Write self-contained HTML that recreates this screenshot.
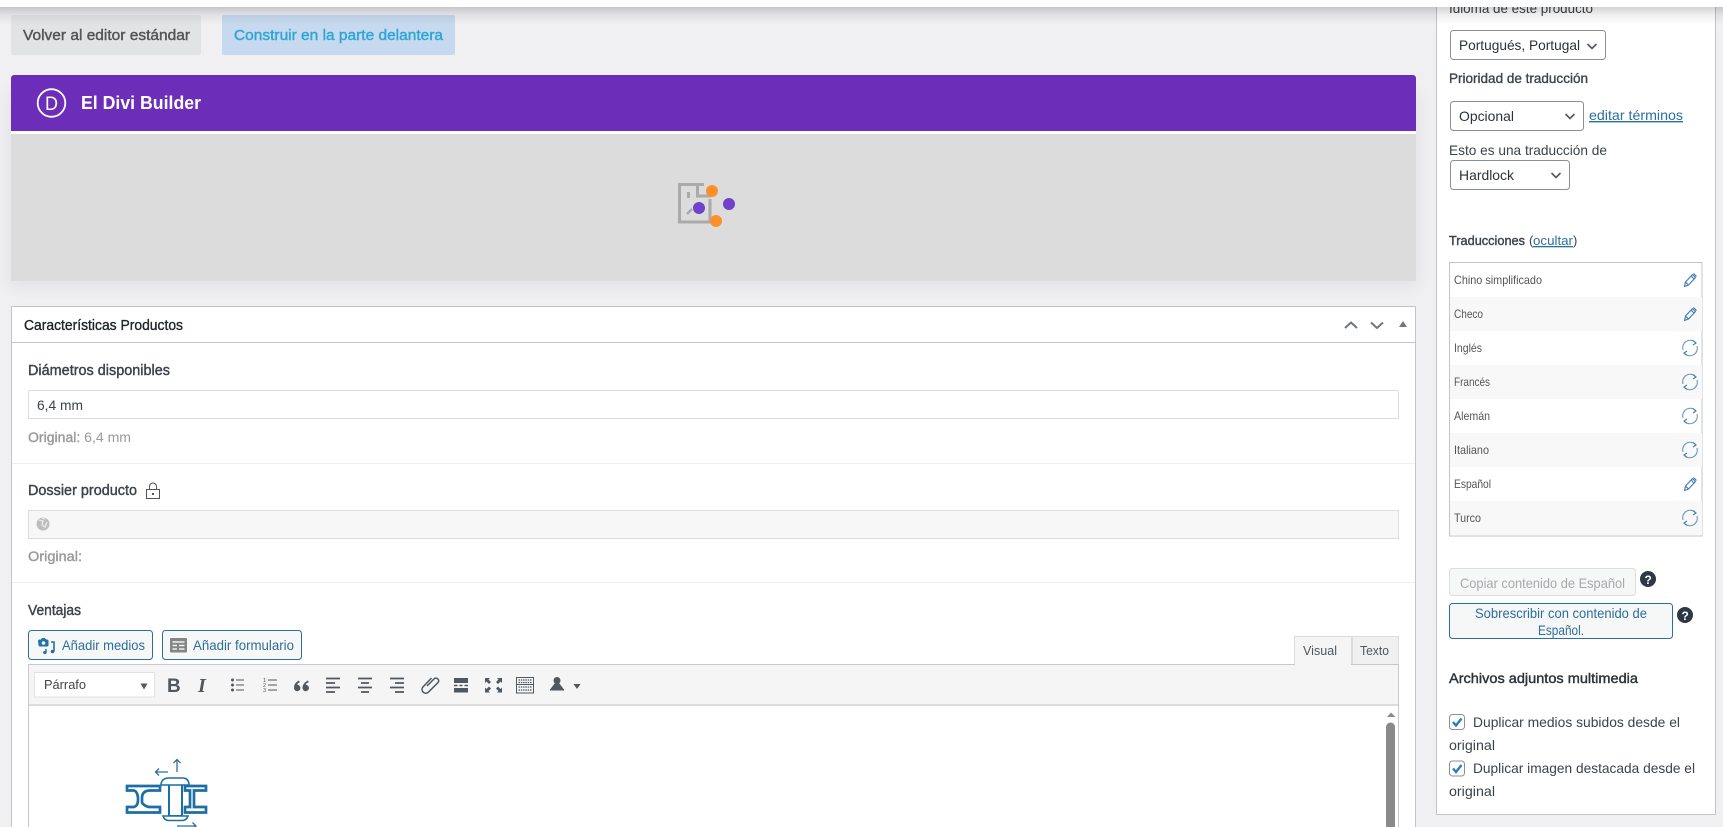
<!DOCTYPE html>
<html lang="es">
<head>
<meta charset="utf-8">
<title>El Divi Builder</title>
<style>
html,body{margin:0;padding:0;width:1723px;height:827px;overflow:hidden;background:#f0f0f2}
svg{display:block}
text{font-family:"Liberation Sans",sans-serif;font-size:14px;fill:#3c434a}
.li{font-size:12px;fill:#555}
.lnk{fill:#2a6f9e;text-decoration:underline}
.lab{font-size:14.500px;fill:#3c434a;stroke:#3c434a;stroke-width:.4px}
</style>
</head>
<body>
<svg width="1723" height="827" viewBox="0 0 1723 827" xmlns="http://www.w3.org/2000/svg">
<defs>
<linearGradient id="top" x1="0" y1="0" x2="0" y2="1"><stop offset="0" stop-color="#000" stop-opacity=".17"/><stop offset=".45" stop-color="#000" stop-opacity=".06"/><stop offset="1" stop-color="#000" stop-opacity="0"/></linearGradient>
<filter id="bl" x="-5%" y="-20%" width="110%" height="140%"><feGaussianBlur stdDeviation="8"/></filter>
<g id="pen" fill="none" stroke="#3c7ab0" stroke-width="1.100" stroke-linejoin="round"><path d="M-5.500 6.500 -4.500 2 2.500 -5.500 5.500 -2.500 -1.500 5 Z"/><path d="M1 -4 4 -1M-4.500 2-1.500 5"/><path d="M3.500 -6.500 6.500 -3.500"/></g>
<g id="syn" fill="none" stroke="#6b98bb" stroke-width="1.100"><path d="M-7 2A7.500 7.500 0 0 1 5.500 -5.500"/><path d="M7 -2A7.500 7.500 0 0 1 -5.500 5.500"/><path d="M3 -7.500 6 -5 3 -3" stroke="#3c7ab0"/><path d="M-3 7.500 -6 5 -3 3" stroke="#3c7ab0"/></g>
<g id="chev" fill="none" stroke="#50575e" stroke-width="1.600"><path d="M-4.500 -2 0 2.500 4.500 -2"/></g>
</defs>

<rect width="1723" height="827" fill="#f0f0f2"/>

<!-- buttons -->
<rect x="11" y="15" width="190" height="40" rx="2" fill="#e2e3e5"/>
<rect x="222" y="15" width="233" height="40" rx="2" fill="#c6d9ee"/>
<text x="23" y="40" textLength="167" lengthAdjust="spacingAndGlyphs" style="font-size:14.500px;fill:#555;stroke:#555;stroke-width:.4px">Volver al editor estándar</text>
<text x="234" y="40" textLength="209" lengthAdjust="spacingAndGlyphs" style="font-size:14.500px;fill:#2ea6d6;stroke:#2ea6d6;stroke-width:.4px">Construir en la parte delantera</text>

<!-- divi -->
<rect x="8" y="90" width="1411" height="198" fill="#000" opacity=".05" filter="url(#bl)"/>
<rect x="11" y="75" width="1405" height="59" fill="#fff"/>
<path d="M11 131V78a3 3 0 0 1 3-3H1413a3 3 0 0 1 3 3V131Z" fill="#6c2eb9"/>
<rect x="11" y="134" width="1405" height="147" fill="#dcdcdc"/>
<circle cx="51.500" cy="103" r="13.800" fill="none" stroke="#fff" stroke-width="1.800"/>
<text x="45" y="110" textLength="13" lengthAdjust="spacingAndGlyphs" style="fill:#fff;font-size:19px">D</text>
<text x="81" y="109" textLength="120" lengthAdjust="spacingAndGlyphs" style="fill:#fff;font-size:18.500px;font-weight:700">El Divi Builder</text>

<!-- loader -->
<path d="M710 199V222H679.500V184.500H704" fill="none" stroke="#aaa" stroke-width="3"/>
<path d="M697.500 184V196H711" fill="none" stroke="#aaa" stroke-width="3"/>
<rect x="687" y="192" width="3" height="6" fill="#aaa"/>
<path d="M687 214 692 209" stroke="#aaa" stroke-width="2.500"/>
<circle cx="712" cy="191" r="6" fill="#ff8f2b"/>
<circle cx="716" cy="221" r="6" fill="#ff8f2b"/>
<circle cx="699" cy="208" r="6" fill="#6f42c9"/>
<circle cx="729" cy="204" r="6" fill="#6f42c9"/>

<!-- metabox -->
<rect x="11.500" y="306.500" width="1404" height="540" fill="#fff" stroke="#c3c4c7"/>
<path d="M11 342.500H1416" stroke="#c3c4c7"/>
<text x="24" y="330" textLength="159" lengthAdjust="spacingAndGlyphs" style="font-size:14.500px;fill:#1d2327;stroke:#1d2327;stroke-width:.35px">Características Productos</text>
<path d="M1345 328 1351 322.500 1357 328" fill="none" stroke="#72777c" stroke-width="2"/>
<path d="M1371 322.500 1377 328 1383 322.500" fill="none" stroke="#72777c" stroke-width="2"/>
<path d="M1399 327 1403 321 1407 327Z" fill="#72777c"/>

<text class="lab" x="28" y="375" textLength="142" lengthAdjust="spacingAndGlyphs">Diámetros disponibles</text>
<rect x="28.500" y="390.500" width="1370" height="28" rx="1" fill="#fff" stroke="#dcdcde"/>
<text x="37" y="410" textLength="46" lengthAdjust="spacingAndGlyphs" style="fill:#3c434a">6,4 mm</text>
<text x="28" y="442" textLength="103" lengthAdjust="spacingAndGlyphs" style="fill:#9a9a9a"><tspan style="stroke:#9a9a9a;stroke-width:.4px">Original:</tspan> 6,4 mm</text>
<path d="M12 463.500H1415" stroke="#eee"/>

<text class="lab" x="28" y="495" textLength="109" lengthAdjust="spacingAndGlyphs">Dossier producto</text>
<rect x="146.500" y="489.500" width="13" height="9" fill="none" stroke="#555"/>
<path d="M149.500 489V486.500a3.500 3.500 0 0 1 7 0V489" fill="none" stroke="#555"/>
<rect x="152" y="493" width="2" height="2" fill="#555"/>
<rect x="28.500" y="510.500" width="1370" height="28" fill="#f7f7f7" stroke="#dcdcde"/>
<circle cx="43" cy="524" r="6.500" fill="#bdbdbd"/>
<path d="M39 520 43 521 42 525 45 527 47 522M42 518 45 519" fill="none" stroke="#ececec" stroke-width="1.300"/>
<text x="28" y="561" textLength="54" lengthAdjust="spacingAndGlyphs" style="fill:#9a9a9a;stroke:#9a9a9a;stroke-width:.4px">Original:</text>
<path d="M12 582.500H1415" stroke="#eee"/>

<text class="lab" x="28" y="615" textLength="53" lengthAdjust="spacingAndGlyphs">Ventajas</text>

<!-- media buttons -->
<rect x="28.500" y="630.500" width="124" height="29" rx="3" fill="#f6f7f7" stroke="#2c6e9c"/>
<rect x="162.500" y="630.500" width="139" height="29" rx="3" fill="#f6f7f7" stroke="#2c6e9c"/>
<path d="M38 641a1.500 1.500 0 0 1 1.500-1.500h1.500l1-1.500h3l1 1.500h1a1.500 1.500 0 0 1 1.500 1.500v4a1.500 1.500 0 0 1-1.500 1.500h-7a1.500 1.500 0 0 1-1.500-1.500Z" fill="#2271a8"/>
<circle cx="43.500" cy="643" r="1.800" fill="#f6f7f7"/>
<path d="M51 642h3v9.500" fill="none" stroke="#2271a8" stroke-width="1.600"/>
<circle cx="52.500" cy="651.500" r="1.800" fill="#2271a8"/>
<path d="M46 649v3.500" stroke="#2271a8" stroke-width="1.500"/>
<circle cx="44.800" cy="652.500" r="1.600" fill="#2271a8"/>
<text x="62" y="650" textLength="83" lengthAdjust="spacingAndGlyphs" style="fill:#2c6e9c">Añadir medios</text>
<rect x="170" y="638" width="17" height="14.500" rx="1" fill="#858585"/>
<path d="M172.500 642H184.500M172.500 645.500H177M179 645.500H184.500M172.500 649H177M179 649H184.500" stroke="#f0f0f0" stroke-width="1.400"/>
<text x="193" y="650" textLength="101" lengthAdjust="spacingAndGlyphs" style="fill:#2c6e9c">Añadir formulario</text>

<!-- tabs -->
<rect x="1352.500" y="636.500" width="46" height="28" fill="#f0f0f1" stroke="#dcdcde"/>
<path d="M1294.500 664V636.500H1351.500V664" fill="#f5f5f5" stroke="#dcdcde"/>
<text x="1303" y="655" textLength="34" lengthAdjust="spacingAndGlyphs" style="fill:#50575e;font-size:13px">Visual</text>
<text x="1360" y="655" textLength="29" lengthAdjust="spacingAndGlyphs" style="fill:#50575e;font-size:13px">Texto</text>

<!-- editor -->
<rect x="28.500" y="664.500" width="1370" height="170" fill="#fff" stroke="#c9c9cb"/>
<rect x="29" y="665" width="1369" height="40" fill="#f5f5f5"/>
<rect x="1295" y="664" width="56" height="2" fill="#f5f5f5"/>
<rect x="29" y="704" width="1369" height="2" fill="#dcdcde"/>
<rect x="34.500" y="672.500" width="120" height="24.500" fill="#fff" stroke="#e2e2e2"/>
<text x="44" y="689" textLength="42" lengthAdjust="spacingAndGlyphs" style="fill:#444;font-size:13px">Párrafo</text>
<path d="M140.500 683.500H147.500L144 689.500Z" fill="#50575e"/>

<g fill="#50575e">
<text x="167" y="692" style="fill:#50575e;font-size:19px;font-weight:700">B</text>
<text x="198" y="692" style="fill:#50575e;font-size:20px;font-weight:700;font-style:italic;font-family:'Liberation Serif',serif">I</text>
<circle cx="232.500" cy="680" r="1.500"/><circle cx="232.500" cy="685" r="1.500"/><circle cx="232.500" cy="690" r="1.500"/>
<path d="M236 680H244M236 685H244M236 690H244" stroke="#50575e"/>
<path d="M268 680H277M268 685H277M268 690H277" stroke="#50575e"/>
<text x="263" y="682" style="fill:#50575e;font-size:5.500px">1</text><text x="263" y="687" style="fill:#50575e;font-size:5.500px">2</text><text x="263" y="692" style="fill:#50575e;font-size:5.500px">3</text>
<path d="M299 680.500C295 682.500 294 685 294 688A3.200 3.200 0 1 0 297.300 684.800C297.300 684 298 683 299.800 682.300ZM308 680.500C304 682.500 302.500 685 302.500 688A3.200 3.200 0 1 0 305.800 684.800C305.800 684 306.500 683 308.800 682.300Z"/>
<path d="M326 678.500H340M326 683H335M326 687.500H340M326 692H335" stroke="#50575e" stroke-width="1.700"/>
<path d="M358 678.500H372M361 683H369M358 687.500H372M361 692H369" stroke="#50575e" stroke-width="1.700"/>
<path d="M390 678.500H404M395 683H404M390 687.500H404M395 692H404" stroke="#50575e" stroke-width="1.700"/>
<path d="M427 686 434.500 678.500a2.800 2.800 0 0 1 3.800 3.800L428 692.500a3.800 3.800 0 0 1-5.300-5.300L431.500 678" fill="none" stroke="#50575e" stroke-width="1.500"/>
<rect x="454" y="678" width="14" height="5"/><rect x="454" y="688" width="14" height="4.500"/>
<path d="M454 685.500H457.500M459.500 685.500H462.500M464.500 685.500H468" stroke="#50575e" stroke-width="1.400"/>
<path d="M485 678H490L488.500 679.500 491 682 489 684 486.500 681.500 485 683ZM502 678V683L500.500 681.500 498 684 496 682 498.500 679.500 497 678ZM485 692.500V687.500L486.500 689 489 686.500 491 688.500 488.500 691 490 692.500ZM502 692.500H497L498.500 691 496 688.500 498 686.500 500.500 689 502 687.500Z"/>
<rect x="516.500" y="677.500" width="17" height="15.500" fill="none" stroke="#50575e"/>
<path d="M516 684.500H534" stroke="#50575e"/>
<path d="M518.500 680H532M518.500 682.500H532M518.500 687H532M518.500 690H532" stroke="#50575e" stroke-width="1.300" stroke-dasharray="1.500 .8"/>
<circle cx="557" cy="680.500" r="3.500"/>
<path d="M555 683 550 689.500V690.500H564V689.500L559 683Z"/>
<path d="M573.500 684H580.500L577 689Z"/>
</g>

<!-- scrollbar -->
<path d="M1387 717 1391 712.500 1395.500 717Z" fill="#8a8a8a"/>
<path d="M1386 727a4.500 4.500 0 0 1 9 0V827H1386Z" fill="#8a8a8a"/>

<!-- chain image -->
<g fill="none" stroke="#1c6ea4" stroke-width="2.700">
<path d="M127 786H160V790.500H149C144 791 142 794 142 798V802C142 803 144 806 149 807H160V812.500H127V807H134C137 806 138 803 138 800V798C138 794 136 791 134 790.500H127Z"/>
<path d="M185 786H206V790.500H194V807H206V812.500H185V807H190V790.500H185Z"/>
</g>
<rect x="169" y="783" width="13" height="33" fill="#fff" stroke="#1c6ea4" stroke-width="2"/>
<path d="M161 785C161 780 165 778 168 778H183C186 778 189 780 189 785Z" fill="#fff" stroke="#1c6ea4" stroke-width="1.600"/>
<path d="M163 816H188C187 819 185 820.500 182 820.500H169C166 820.500 164 819 163 816Z" fill="#fff" stroke="#1c6ea4" stroke-width="1.600"/>
<g fill="none" stroke="#2c6e9c" stroke-width="1.300">
<path d="M177 772V759.500M173.500 763 177 759.500 180.500 763"/>
<path d="M155.500 772H168M159 768.500 155.500 772 159 775.500"/>
<path d="M177 826H196M192.500 822.500 196 826 192.500 829.500"/>
</g>

<!-- sidebar -->
<rect x="1436.500" y="-2" width="279" height="816.500" fill="#fff" stroke="#c3c4c7"/>
<text x="1449" y="13" textLength="144" lengthAdjust="spacingAndGlyphs" style="fill:#3c434a">Idioma de este producto</text>

<rect x="1450.500" y="30.500" width="155" height="29" rx="3" fill="#fff" stroke="#8c8f94"/>
<text x="1459" y="50" textLength="121" lengthAdjust="spacingAndGlyphs" style="fill:#2c3338">Portugués, Portugal</text>
<use href="#chev" x="1592" y="46"/>

<text x="1449" y="83" textLength="139" lengthAdjust="spacingAndGlyphs" style="fill:#3c434a;stroke:#3c434a;stroke-width:.35px">Prioridad de traducción</text>
<rect x="1450.500" y="101.500" width="133" height="29" rx="3" fill="#fff" stroke="#8c8f94"/>
<text x="1459" y="121" textLength="55" lengthAdjust="spacingAndGlyphs" style="fill:#2c3338">Opcional</text>
<use href="#chev" x="1570" y="116"/>
<text class="lnk" x="1589" y="120" textLength="94" lengthAdjust="spacingAndGlyphs">editar términos</text>

<text x="1449" y="155" textLength="158" lengthAdjust="spacingAndGlyphs" style="fill:#3c434a">Esto es una traducción de</text>
<rect x="1450.500" y="160.500" width="119" height="29" rx="3" fill="#fff" stroke="#8c8f94"/>
<text x="1459" y="180" textLength="55" lengthAdjust="spacingAndGlyphs" style="fill:#2c3338">Hardlock</text>
<use href="#chev" x="1556" y="175"/>

<text x="1449" y="245" textLength="76" lengthAdjust="spacingAndGlyphs" style="fill:#3c434a;stroke:#3c434a;stroke-width:.4px;font-size:13px">Traducciones</text>
<text x="1529" y="245" style="fill:#3c434a;font-size:13px">(</text>
<text class="lnk" x="1533" y="245" textLength="40" lengthAdjust="spacingAndGlyphs" style="font-size:13px">ocultar</text>
<text x="1573" y="245" style="fill:#3c434a;font-size:13px">)</text>

<rect x="1449.500" y="262.500" width="252.500" height="273.500" fill="#fff" stroke="#c3c4c7"/>
<rect x="1450" y="297" width="252" height="34" fill="#f8f8f9"/>
<rect x="1450" y="365" width="252" height="34" fill="#f8f8f9"/>
<rect x="1450" y="433" width="252" height="34" fill="#f8f8f9"/>
<rect x="1450" y="501" width="252" height="34" fill="#f8f8f9"/>
<text class="li" x="1454" y="284" textLength="88" lengthAdjust="spacingAndGlyphs">Chino simplificado</text>
<text class="li" x="1454" y="318" textLength="29" lengthAdjust="spacingAndGlyphs">Checo</text>
<text class="li" x="1454" y="352" textLength="28" lengthAdjust="spacingAndGlyphs">Inglés</text>
<text class="li" x="1454" y="386" textLength="36" lengthAdjust="spacingAndGlyphs">Francés</text>
<text class="li" x="1454" y="420" textLength="36" lengthAdjust="spacingAndGlyphs">Alemán</text>
<text class="li" x="1454" y="454" textLength="35" lengthAdjust="spacingAndGlyphs">Italiano</text>
<text class="li" x="1454" y="488" textLength="37" lengthAdjust="spacingAndGlyphs">Español</text>
<text class="li" x="1454" y="522" textLength="27" lengthAdjust="spacingAndGlyphs">Turco</text>
<use href="#pen" x="1690" y="280"/>
<use href="#pen" x="1690" y="314"/>
<use href="#syn" x="1690" y="348"/>
<use href="#syn" x="1690" y="382"/>
<use href="#syn" x="1690" y="416"/>
<use href="#syn" x="1690" y="450"/>
<use href="#pen" x="1690" y="484"/>
<use href="#syn" x="1690" y="518"/>

<rect x="1449.500" y="568.500" width="186" height="27" rx="3" fill="#f6f7f7" stroke="#dcdcde"/>
<text x="1460" y="588" textLength="165" lengthAdjust="spacingAndGlyphs" style="fill:#a7aaad">Copiar contenido de Español</text>
<circle cx="1648" cy="579" r="8" fill="#2c3845"/>
<text x="1644.500" y="584" style="fill:#fff;font-size:12px;font-weight:700">?</text>

<rect x="1449.500" y="603.500" width="223" height="35" rx="3" fill="#f6f7f7" stroke="#2c6e9c"/>
<text x="1475" y="618" textLength="172" lengthAdjust="spacingAndGlyphs" style="fill:#2c6e9c">Sobrescribir con contenido de</text>
<text x="1538" y="635" textLength="46" lengthAdjust="spacingAndGlyphs" style="fill:#2c6e9c">Español.</text>
<circle cx="1685" cy="615" r="8" fill="#2c3845"/>
<text x="1681.500" y="620" style="fill:#fff;font-size:12px;font-weight:700">?</text>

<text x="1449" y="683" textLength="189" lengthAdjust="spacingAndGlyphs" style="fill:#2c3338;stroke:#2c3338;stroke-width:.4px">Archivos adjuntos multimedia</text>

<rect x="1449.500" y="714.500" width="15" height="15" rx="3" fill="#fff" stroke="#8c8f94"/>
<path d="M1453 722 1456 725.500 1461.500 718.500" fill="none" stroke="#2c7cc0" stroke-width="2.400"/>
<text x="1473" y="727" textLength="207" lengthAdjust="spacingAndGlyphs" style="fill:#3c434a">Duplicar medios subidos desde el</text>
<text x="1449" y="750" textLength="46" lengthAdjust="spacingAndGlyphs" style="fill:#3c434a">original</text>
<rect x="1449.500" y="761" width="15" height="15" rx="3" fill="#fff" stroke="#8c8f94"/>
<path d="M1453 768.500 1456 772 1461.500 765" fill="none" stroke="#2c7cc0" stroke-width="2.400"/>
<text x="1473" y="773" textLength="222" lengthAdjust="spacingAndGlyphs" style="fill:#3c434a">Duplicar imagen destacada desde el</text>
<text x="1449" y="796" textLength="46" lengthAdjust="spacingAndGlyphs" style="fill:#3c434a">original</text>

<!-- top bar -->
<rect x="0" y="7" width="1723" height="18" fill="url(#top)"/>
<rect x="0" y="0" width="1723" height="7" fill="#fff"/>
</svg>
</body>
</html>
